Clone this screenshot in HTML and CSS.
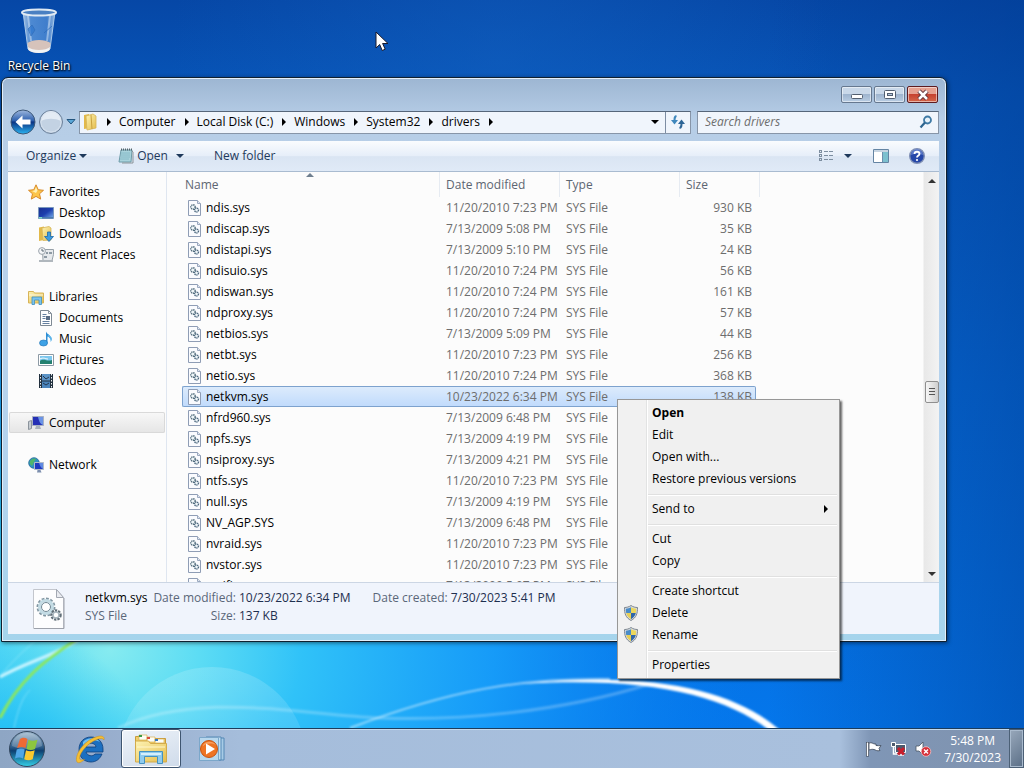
FILE: index.html
```
<!DOCTYPE html>
<html lang="en">
<head>
  <meta charset="UTF-8" />
  <meta name="viewport" content="width=device-width, initial-scale=1" />
  <title>drivers</title>
  <link rel="stylesheet" href="styles.css">
</head>
<body>

  <!-- Shared icons -->
  <svg class="defs" aria-hidden="true">
    <defs>
      <linearGradient id="orb" x1="0" y1="0" x2="0" y2="1">
        <stop offset="0" stop-color="#9fb9cf"/><stop offset=".45" stop-color="#2d5c88"/><stop offset=".55" stop-color="#0d3f70"/><stop offset="1" stop-color="#35d0e8"/>
      </linearGradient>
      <linearGradient id="back" x1="0" y1="0" x2="0" y2="1">
        <stop offset="0" stop-color="#9fb8de"/><stop offset=".45" stop-color="#2c5fae"/><stop offset=".5" stop-color="#0a3383"/><stop offset="1" stop-color="#2bb4f2"/>
      </linearGradient>
      <linearGradient id="folder" x1="0" y1="0" x2="1" y2="1">
        <stop offset="0" stop-color="#fdf3b4"/><stop offset="1" stop-color="#e5bd4c"/>
      </linearGradient>
      <linearGradient id="screen" x1="0" y1="0" x2="1" y2="1">
        <stop offset="0" stop-color="#1a2f8f"/><stop offset=".5" stop-color="#1d3fae"/><stop offset="1" stop-color="#7cb4ee"/>
      </linearGradient>
      <linearGradient id="glass" x1="0" y1="0" x2="1" y2="0">
        <stop offset="0" stop-color="#c4d9ee"/><stop offset=".25" stop-color="#5f99dc"/><stop offset=".75" stop-color="#4d8ad4"/><stop offset="1" stop-color="#b5cfea"/>
      </linearGradient>
      <symbol id="sys" viewBox="2 0 16 16">
        <path d="M2.500.5h9l3 3v12h-12z" fill="#fafbfe" stroke="#8f9db5"/>
        <path d="M11.500.5v3h3" fill="#e3e8f0" stroke="#9aa8bf"/>
        <circle cx="7" cy="7" r="2.200" fill="#eef5f8" stroke="#57707f" stroke-width="1.400" stroke-dasharray="1.300 .6"/>
        <circle cx="10.500" cy="10" r="2" fill="#eef5f8" stroke="#4d687f" stroke-width="1.400" stroke-dasharray="1.200 .6"/>
      </symbol>
      <symbol id="shield" viewBox="0 0 16 16">
        <path d="M8 .5C10 2 12.500 2.500 14.500 2.500c0 6-1 10-6.500 13C2.500 12.500 1.500 8.500 1.500 2.500 3.500 2.500 6 2 8 .5z" fill="#d9dde2" stroke="#7d868f"/>
        <path d="M8 2.200V8H3.200C2.900 6.800 2.800 5.200 2.800 3.700 4.800 3.600 6.500 3.100 8 2.200z" fill="#4a8cc8"/>
        <path d="M8 2.200V8h4.800c.3-1.200.4-2.800.4-4.300C11.200 3.600 9.500 3.100 8 2.200z" fill="#ecd75c"/>
        <path d="M8 8v6.200C5.500 12.700 3.900 10.800 3.200 8z" fill="#e8cf55"/>
        <path d="M8 8v6.200c2.500-1.500 4.100-3.400 4.800-6.200z" fill="#2f66a8"/>
      </symbol>
    </defs>
  </svg>

  <!-- Wallpaper -->
  <svg class="wallpaper" viewBox="0 0 1024 768" preserveAspectRatio="none" aria-hidden="true">
    <defs>
      <linearGradient id="sky" x1="0" y1="0" x2="0" y2="1">
        <stop offset="0" stop-color="#0647a6"/><stop offset=".12" stop-color="#0755b8"/><stop offset=".5" stop-color="#0668d4"/><stop offset="1" stop-color="#0478ee"/>
      </linearGradient>
      <radialGradient id="glow" gradientUnits="userSpaceOnUse" cx="110" cy="650" r="640" gradientTransform="matrix(1 0 0 .8 0 130)">
        <stop offset="0" stop-color="#86ebf0"/><stop offset=".14" stop-color="#5cdcf4"/><stop offset=".3" stop-color="#30c2f8"/><stop offset=".6" stop-color="#189ffa" stop-opacity=".9"/><stop offset="1" stop-color="#0a82f4" stop-opacity="0"/>
      </radialGradient>
      <linearGradient id="edge" x1="0" y1="0" x2="1" y2="0">
        <stop offset=".75" stop-color="#003a90" stop-opacity="0"/><stop offset="1" stop-color="#003a90" stop-opacity=".45"/>
      </linearGradient>
      <radialGradient id="topglow" gradientUnits="userSpaceOnUse" cx="500" cy="60" r="330">
        <stop offset="0" stop-color="#1464c4" stop-opacity=".45"/><stop offset="1" stop-color="#1464c4" stop-opacity="0"/>
      </radialGradient>
      <radialGradient id="corner" gradientUnits="userSpaceOnUse" cx="20" cy="760" r="130">
        <stop offset="0" stop-color="#10b8f4" stop-opacity=".8"/><stop offset="1" stop-color="#10b8f4" stop-opacity="0"/>
      </radialGradient>
      <linearGradient id="bubble" x1="0" y1="0" x2="0" y2="1">
        <stop offset="0" stop-color="#fff" stop-opacity=".16"/><stop offset="1" stop-color="#fff" stop-opacity="0"/>
      </linearGradient>
      <filter id="soft" x="-10%" y="-30%" width="120%" height="160%"><feGaussianBlur stdDeviation="1"/></filter>
    </defs>
    <rect width="1024" height="768" fill="url(#sky)"/>
    <rect width="1024" height="768" fill="url(#topglow)"/>
    <rect width="1024" height="768" fill="url(#glow)"/>
    <rect width="1024" height="768" fill="url(#corner)"/>
    <rect width="1024" height="768" fill="url(#edge)"/>
    <circle cx="212" cy="762" r="95" fill="url(#bubble)"/>
    <g fill="none" stroke="#fff" filter="url(#soft)">
      <path d="M118 728C200 690 300 715 380 718S560 712 650 684" stroke-opacity=".25" stroke-width="3"/>
      <path d="M350 728C450 690 520 678 610 679" stroke-opacity=".5" stroke-width="2"/>
      <path d="M520 684C660 670 735 692 780 730L769 730C725 696 650 676 520 684z" fill="#fff" stroke="none"/>
      <path d="M0 677C26 662 54 656 78 640" stroke="#c8f4ff" stroke-width="3"/>
      <path d="M0 676C12 662 22 652 36 640M14 728C20 700 26 694 30 690" stroke="#b9f3ff" stroke-opacity=".5"/>
      <path d="M0 718C18 682 44 660 76 640" stroke="#8ee85a" stroke-width="3"/>
    </g>
  </svg>

  <main class="desktop">
    <a class="desktop-icon" href="#recycle-bin">
      <svg width="40" height="48" viewBox="0 0 40 48" aria-hidden="true">
        <path d="M4 5l5 37c3 4 19 4 22 0l5-37z" fill="url(#glass)" fill-opacity=".8" stroke="#a9c9ea"/>
        <path d="M8.500 36c5-4 18-4 23 0l-1 7c-4 4-17 4-21 0z" fill="#d6c3bb"/>
        <path d="M9 40c4 4 18 4 22 0l-.5 3c-4 4-17 4-21 0z" fill="#f1f3f5"/>
        <path d="M9 9l3 25M31 9l-3 25" stroke="#dceaf8" stroke-width="2" opacity=".5"/>
        <path d="M9 22l4-4 3 5-4 6zM25 26c3-3 5-4 8-7" fill="#2f77cf" stroke="#2c6ab8" opacity=".7"/>
        <ellipse cx="20" cy="5.500" rx="17" ry="3" fill="#4a80c2" stroke="#dfe9f3" stroke-width="2"/>
      </svg>
      <span>Recycle Bin</span>
    </a>

    <!-- Explorer window -->
    <section class="window" aria-label="drivers">
      <div class="titlebar">
        <button class="win-btn" aria-label="Minimize"><svg width="14" height="12" viewBox="0 0 14 12"><rect x="1.500" y="5.500" width="11" height="4" rx="1" fill="#fff" stroke="#535f70"/></svg></button>
        <button class="win-btn" aria-label="Maximize"><svg width="14" height="12" viewBox="0 0 14 12"><rect x="1.500" y="1.500" width="11" height="8" rx="1" fill="#fff" stroke="#535f70"/><rect x="4.500" y="4.500" width="5" height="2" fill="#b7c9de" stroke="#535f70"/></svg></button>
        <button class="win-btn close" aria-label="Close"><svg width="14" height="12" viewBox="0 0 14 12"><path d="M3 2l8 8M11 2l-8 8" stroke="#5a3038" stroke-width="4.500"/><path d="M3 2l8 8M11 2l-8 8" stroke="#fff" stroke-width="2.500"/></svg></button>
      </div>

      <div class="navbar">
        <div class="history">
          <button aria-label="Back"><svg width="26" height="26" viewBox="0 0 26 26"><circle cx="13" cy="13" r="12" fill="url(#back)" stroke="#3d5878"/><path d="M5.500 13l7-6.500v4h8v5h-8v4z" fill="#fff"/></svg></button>
          <button aria-label="Forward"><svg width="26" height="26" viewBox="0 0 26 26"><circle cx="13" cy="13" r="11.500" fill="#c3d2e3" stroke="#6a7f99"/><path d="M3 12a10 10 0 0 1 20 0c-6-3-14-3-20 0z" fill="#e4ecf5"/><circle cx="13" cy="13" r="10" fill="none" stroke="#dbe6f1" stroke-opacity=".7"/></svg></button>
          <button aria-label="Recent pages"><svg width="10" height="6" viewBox="0 0 10 6"><path d="M1 .5h8L5 5z" fill="#5aa7d8" stroke="#23557f"/></svg></button>
        </div>
        <nav class="address" aria-label="Address">
          <svg class="address-icon" width="16" height="18" viewBox="0 0 16 18" aria-hidden="true"><path d="M2 2l5-1 1 14-6 1z" fill="#e2b94a"/><path d="M4 3l7-2 3 2v12l-9 2z" fill="url(#folder)" stroke="#d6b558" stroke-width=".8"/><path d="M9 2l1 14" stroke="#c9a23e" fill="none"/></svg>
          <i class="arrow"></i><a href="#computer">Computer</a>
          <i class="arrow"></i><a href="#c">Local Disk (C:)</a>
          <i class="arrow"></i><a href="#windows">Windows</a>
          <i class="arrow"></i><a href="#system32">System32</a>
          <i class="arrow"></i><a href="#drivers">drivers</a>
          <i class="arrow"></i>
          <button class="drop" aria-label="Previous locations"><i class="caret"></i></button>
          <button class="refresh" aria-label="Refresh"><svg width="16" height="14" viewBox="0 0 16 14"><path d="M6.500 1C4.500 1.500 4.500 3 4.500 6" fill="none" stroke="#4088bd" stroke-width="2"/><path d="M1 5h7l-3.500 4.500z" fill="#4088bd"/><path d="M9.500 13c2-.5 2-2 2-5" fill="none" stroke="#2d6596" stroke-width="2"/><path d="M8 9h7l-3.500-4.500z" fill="#2d6596"/></svg></button>
        </nav>
        <div class="search">
          <input type="text" placeholder="Search drivers" aria-label="Search drivers">
          <svg width="14" height="14" viewBox="0 0 14 14" aria-hidden="true"><circle cx="8.500" cy="5" r="3.500" fill="#e8f2fa" stroke="#3f7aa5" stroke-width="1.800"/><path d="M6 7.500L1.500 12.500" stroke="#2e6590" stroke-width="2.200"/></svg>
        </div>
      </div>

      <div class="client">
        <div class="toolbar">
          <button class="organize">Organize <i class="caret"></i></button>
          <button class="open-btn">
            <svg width="16" height="16" viewBox="0 0 16 16" aria-hidden="true"><path d="M3 2h11l-1 12H1z" fill="#a9d3dc" stroke="#6d9ba8"/><path d="M14 3l1 1v11H4" fill="none" stroke="#8b9499"/><path d="M3 5h9M3 7h9M3 9h9M2 11h9" stroke="#7fb5c2" stroke-width=".8"/><path d="M3 1.500h11" stroke="#55646b" stroke-width="2" stroke-dasharray="1 1"/></svg>
            Open
          </button>
          <button class="open-drop" aria-label="Open options"><i class="caret"></i></button>
          <button class="new-folder">New folder</button>
          <div class="view-tools">
            <button aria-label="Change your view"><svg width="16" height="14" viewBox="0 0 16 14"><g fill="none" stroke="#7d8ea0"><rect x="1.500" y="1.500" width="2" height="2"/><rect x="1.500" y="5.500" width="2" height="2"/><rect x="1.500" y="9.500" width="2" height="2"/><path d="M6 2.500h4M11 2.500h4M6 6.500h4M11 6.500h4M6 10.500h4M11 10.500h4"/></g></svg></button>
            <button class="view-drop" aria-label="More options"><i class="caret"></i></button>
            <button class="pane-btn" aria-label="Show the preview pane"><svg width="16" height="14" viewBox="0 0 16 14"><path d="M.5.5h15v13H.5z" fill="#fff" stroke="#6484a3"/><path d="M1 2h14" stroke="#8fabc6"/><path d="M10 3h5v10h-5z" fill="#7cc0cf"/><path d="M9.500 3v10" stroke="#6f8fae"/></svg></button>
            <button aria-label="Get help"><svg width="16" height="16" viewBox="0 0 16 16"><circle cx="8" cy="8" r="7.300" fill="#2547a8" stroke="#7f8fb4" stroke-width="1.400"/><path d="M2 7a6 6 0 0 1 12 0c-4-2-8-2-12 0z" fill="#7f9ade" opacity=".6"/><path d="M5.500 6c0-3 5-3 5 0 0 1.500-2.500 1.700-2.500 3.500" fill="none" stroke="#fff" stroke-width="1.800"/><circle cx="8" cy="12" r="1.100" fill="#fff"/></svg></button>
          </div>
        </div>

        <div class="body">
          <nav class="sidebar" aria-label="Navigation pane">
            <ul>
              <li><a href="#favorites"><svg viewBox="0 0 16 16"><path d="M8 .8l2.200 4.900 5.300.6-4 3.500 1.200 5.300L8 12.400l-4.700 2.700 1.200-5.300-4-3.500 5.300-.6z" fill="#fcc54a" stroke="#d88a2b"/><path d="M8 3l1.500 3.500L8 9 4 7l2.500-.5z" fill="#fff0b5"/></svg>Favorites</a>
                <ul>
                  <li><a href="#desktop"><svg viewBox="0 0 16 16"><path d="M.5 2.500h15v11H.5z" fill="url(#screen)" stroke="#7a98bd"/><path d="M1 12h14v1.500H1z" fill="#4b7bb0"/><path d="M1 12h3v1.500H1z" fill="#7fdcc8"/></svg>Desktop</a></li>
                  <li><a href="#downloads"><svg viewBox="0 0 16 16"><path d="M1 1.500l5-1V14l-5 1z" fill="#e2b94a"/><path d="M4 2l7-1.500 2 1.500v12l-8 .5z" fill="url(#folder)" stroke="#d6b558" stroke-width=".8"/><path d="M9.500 6h3v4.500h3L11 15.500 6.500 10.500h3z" fill="#3d9be0" stroke="#1d68a8" stroke-width=".8"/></svg>Downloads</a></li>
                  <li><a href="#recent"><svg viewBox="0 0 16 16"><path d="M4.500 2.500h11v5l-1.500 6h-9z" fill="#e6e9ec" stroke="#96a0a8"/><circle cx="4" cy="4" r="3.400" fill="#f4f6f8" stroke="#9aa3ab"/><path d="M4 2v2h2" fill="none" stroke="#5c6a75"/><path d="M8 5h2v2H8zM11 5h3v2h-3zM6 9h3v2H6z" fill="#8e9aa4"/><path d="M1 13h14v2H1z" fill="#b0b7bd"/></svg>Recent Places</a></li>
                </ul>
              </li>
              <li><a href="#libraries"><svg viewBox="0 0 16 16"><path d="M.5 2.500h5l1 1.500h9v10H.5z" fill="url(#folder)" stroke="#d8b458"/><path d="M1 6h14" stroke="#fff" opacity=".7"/><path d="M4 8h9.500v7.500H11V11H6.500v4.500H4z" fill="#7cc4ec" stroke="#3f90c2" stroke-width=".8"/></svg>Libraries</a>
                <ul>
                  <li><a href="#documents"><svg viewBox="0 0 16 16"><path d="M2.500.5h8l3 3v12h-11z" fill="#fff" stroke="#7e8994"/><path d="M10.500.5v3h3" fill="none" stroke="#8f99a3"/><path d="M4.500 4.500h4M4.500 6.500h3M4.500 8.500h3M4.500 11.500h7M4.500 13.500h7" stroke="#6580a0"/><path d="M8 6h4v4H8z" fill="#5b6e86"/></svg>Documents</a></li>
                  <li><a href="#music"><svg viewBox="0 0 16 16"><path d="M8 .5c1 3 6 3.500 4.500 9 0-2.500-1.500-3.500-3-4v7H8z" fill="#2f8fd6"/><path d="M10 3c1.500 1.500 4 2.500 4 5 0 1-.5 2-1.500 3 .5-3-1-5-2.500-5.500z" fill="#5cb4ea"/><ellipse cx="5.500" cy="12" rx="4" ry="3" fill="#3fa2e6" stroke="#1d70b2" stroke-width=".6"/></svg>Music</a></li>
                  <li><a href="#pictures"><svg viewBox="0 0 16 16"><path d="M.5 2.500h15v11H.5z" fill="#fff" stroke="#8d9aa5"/><path d="M2 4h12v8H2z" fill="#7cc7ee"/><path d="M2 9c4-3 7 1 12-1v4H2z" fill="#23806f"/><path d="M2 7c3-2 6 0 8 0" stroke="#fff" fill="none"/></svg>Pictures</a></li>
                  <li><a href="#videos"><svg viewBox="0 0 16 16"><path d="M1 1h14v14H1z" fill="#22303e"/><path d="M4 1h8v6.500H4z" fill="#5b93c6"/><path d="M4 8.500h8V15H4z" fill="#4b84bb"/><path d="M5 3l3 3 3-2M5 10l3 2 3-2" stroke="#24384f" fill="none"/><path d="M2.500 1v14M13.500 1v14" stroke="#eef2f5" stroke-dasharray="1.500 1.500"/></svg>Videos</a></li>
                </ul>
              </li>
              <li><a class="selected" href="#computer"><svg viewBox="0 0 16 16"><path d="M.5 6.500l3-1v8l-3 1z" fill="#c6ccd2" stroke="#8b939b"/><path d="M4.500 1.500h11v9h-11z" fill="#2530b5" stroke="#a8b1c2"/><path d="M10 2h5v8c-3-1-4-4-5-8z" fill="#6a93e6"/><path d="M8 11h4l1 3H7z" fill="#aab3bc"/></svg>Computer</a></li>
              <li><a href="#network"><svg viewBox="0 0 16 16"><circle cx="6" cy="6" r="5.300" fill="#2f90c4" stroke="#236a99" stroke-width=".8"/><path d="M2 4c2-3 5-3 6-2L6 5 4 9C2 8 1 6 2 4z" fill="#4fb56b"/><path d="M6.500 5.500h9v7h-9z" fill="#2038c0" stroke="#b1bac9"/><path d="M11 6h4v6c-2-1-3-3-4-6z" fill="#5f8ae2"/><path d="M9.500 13h3l1 2.500H9z" fill="#7d8fae"/></svg>Network</a></li>
            </ul>
          </nav>

          <div class="file-list">
            <table>
              <thead>
                <tr><th class="name sorted">Name</th><th class="date">Date modified</th><th class="type">Type</th><th class="size">Size</th></tr>
              </thead>
              <tbody>
                <tr><td><svg class="file"><use href="#sys"/></svg>ndis.sys</td><td>11/20/2010 7:23 PM</td><td>SYS File</td><td>930 KB</td></tr>
                <tr><td><svg class="file"><use href="#sys"/></svg>ndiscap.sys</td><td>7/13/2009 5:08 PM</td><td>SYS File</td><td>35 KB</td></tr>
                <tr><td><svg class="file"><use href="#sys"/></svg>ndistapi.sys</td><td>7/13/2009 5:10 PM</td><td>SYS File</td><td>24 KB</td></tr>
                <tr><td><svg class="file"><use href="#sys"/></svg>ndisuio.sys</td><td>11/20/2010 7:24 PM</td><td>SYS File</td><td>56 KB</td></tr>
                <tr><td><svg class="file"><use href="#sys"/></svg>ndiswan.sys</td><td>11/20/2010 7:24 PM</td><td>SYS File</td><td>161 KB</td></tr>
                <tr><td><svg class="file"><use href="#sys"/></svg>ndproxy.sys</td><td>11/20/2010 7:24 PM</td><td>SYS File</td><td>57 KB</td></tr>
                <tr><td><svg class="file"><use href="#sys"/></svg>netbios.sys</td><td>7/13/2009 5:09 PM</td><td>SYS File</td><td>44 KB</td></tr>
                <tr><td><svg class="file"><use href="#sys"/></svg>netbt.sys</td><td>11/20/2010 7:23 PM</td><td>SYS File</td><td>256 KB</td></tr>
                <tr><td><svg class="file"><use href="#sys"/></svg>netio.sys</td><td>11/20/2010 7:24 PM</td><td>SYS File</td><td>368 KB</td></tr>
                <tr class="selected"><td><svg class="file"><use href="#sys"/></svg>netkvm.sys</td><td>10/23/2022 6:34 PM</td><td>SYS File</td><td>138 KB</td></tr>
                <tr><td><svg class="file"><use href="#sys"/></svg>nfrd960.sys</td><td>7/13/2009 6:48 PM</td><td>SYS File</td><td></td></tr>
                <tr><td><svg class="file"><use href="#sys"/></svg>npfs.sys</td><td>7/13/2009 4:19 PM</td><td>SYS File</td><td></td></tr>
                <tr><td><svg class="file"><use href="#sys"/></svg>nsiproxy.sys</td><td>7/13/2009 4:21 PM</td><td>SYS File</td><td></td></tr>
                <tr><td><svg class="file"><use href="#sys"/></svg>ntfs.sys</td><td>11/20/2010 7:23 PM</td><td>SYS File</td><td></td></tr>
                <tr><td><svg class="file"><use href="#sys"/></svg>null.sys</td><td>7/13/2009 4:19 PM</td><td>SYS File</td><td></td></tr>
                <tr><td><svg class="file"><use href="#sys"/></svg>NV_AGP.SYS</td><td>7/13/2009 6:48 PM</td><td>SYS File</td><td></td></tr>
                <tr><td><svg class="file"><use href="#sys"/></svg>nvraid.sys</td><td>11/20/2010 7:23 PM</td><td>SYS File</td><td></td></tr>
                <tr><td><svg class="file"><use href="#sys"/></svg>nvstor.sys</td><td>11/20/2010 7:23 PM</td><td>SYS File</td><td></td></tr>
                <tr><td><svg class="file"><use href="#sys"/></svg>nwifi.sys</td><td>7/13/2009 5:07 PM</td><td>SYS File</td><td></td></tr>
              </tbody>
            </table>
          </div>

          <div class="scrollbar">
            <i class="scroll-up"></i>
            <div class="track-before"></div>
            <div class="thumb"></div>
            <div class="track-after"></div>
            <i class="scroll-down"></i>
          </div>
        </div>

        <div class="details">
          <svg class="details-icon" width="32" height="40" viewBox="0 0 32 40" aria-hidden="true">
            <path d="M.5.500h23l7 8v31H.5z" fill="#fdfdfe" stroke="#c3c6cd"/>
            <path d="M31 9v30.500H1" fill="none" stroke="#9da1aa"/>
            <path d="M23.500.5v8h7z" fill="#e9ebf0" stroke="#a3a8b2"/>
            <circle cx="13" cy="18" r="7.500" fill="none" stroke="#8296a2" stroke-width="4" stroke-dasharray="2.500 1.400"/>
            <circle cx="13" cy="18" r="6.500" fill="none" stroke="#c3dbe4" stroke-width="3"/>
            <circle cx="13" cy="18" r="4.500" fill="#fff" stroke="#6f8794"/>
            <circle cx="23" cy="26" r="4" fill="#fff" stroke="#626f78" stroke-width="3.500" stroke-dasharray="2 .9"/>
            <circle cx="23" cy="26" r="3" fill="#fff" stroke="#a9b6be" stroke-width="1.500"/>
          </svg>
          <div class="details-name"><strong>netkvm.sys</strong><span>SYS File</span></div>
          <dl class="props">
            <dt>Date modified:</dt><dd>10/23/2022 6:34 PM</dd>
            <dt>Size:</dt><dd>137 KB</dd>
          </dl>
          <dl class="props">
            <dt>Date created:</dt><dd>7/30/2023 5:41 PM</dd>
          </dl>
        </div>
      </div>
    </section>

    <!-- Context menu -->
    <div class="menu" role="menu">
      <div class="menu-group">
        <button role="menuitem" class="default">Open</button>
        <button role="menuitem">Edit</button>
        <button role="menuitem">Open with...</button>
        <button role="menuitem">Restore previous versions</button>
      </div>
      <div class="menu-group">
        <button role="menuitem">Send to <i class="arrow"></i></button>
      </div>
      <div class="menu-group">
        <button role="menuitem">Cut</button>
        <button role="menuitem">Copy</button>
      </div>
      <div class="menu-group">
        <button role="menuitem">Create shortcut</button>
        <button role="menuitem"><svg class="shield"><use href="#shield"/></svg>Delete</button>
        <button role="menuitem"><svg class="shield"><use href="#shield"/></svg>Rename</button>
      </div>
      <div class="menu-group">
        <button role="menuitem">Properties</button>
      </div>
    </div>

    <svg class="cursor" width="14" height="21" viewBox="0 0 14 21" aria-hidden="true"><path d="M1 1v16l3.700-3.500 2.500 6 3-1.300-2.600-5.700H13z" fill="#fff" stroke="#1a1a2a"/></svg>
  </main>

  <!-- Taskbar -->
  <footer class="taskbar">
    <button class="start" aria-label="Start">
      <svg width="38" height="38" viewBox="0 0 38 38">
        <circle cx="19" cy="19" r="17.500" fill="url(#orb)" stroke="#33485f"/>
        <path d="M4 16a15 13 0 0 1 30 0c-8 4-22 4-30 0z" fill="#fff" opacity=".22"/>
        <path d="M12 9c3-2 5-1.500 7.500 0L17.500 18c-2.500-1.500-5.500-1.500-8.500 0z" fill="#ee6a35"/>
        <path d="M20.500 9.700c2.500 1.500 5.500 1.500 9 0L27 19c-3 1.500-6 1.200-8.500 0z" fill="#8cc63f"/>
        <path d="M8.700 19.500c3-1.500 5.500-1.500 8 0L15 28.500c-2.500-1.500-5-1.500-8 0z" fill="#4fa6e6"/>
        <path d="M18 20.300c2.500 1.300 5.500 1.500 8.700 0l-2 9c-3 1.500-6 1.200-8.500 0z" fill="#fcc92f"/>
      </svg>
    </button>
    <button class="task" aria-label="Internet Explorer">
      <svg width="32" height="32" viewBox="0 0 32 32">
        <path d="M17 4c7 0 12 5 12 12v3H12c1 4 7 5 9 2h7c-2 5-6 8-11 8-7 0-12-5-12-12.500S10 4 17 4zm-5 10h10c-.500-5-9-5-10 0z" fill="#1c6fc0" stroke="#0d3f7c" stroke-width=".8"/>
        <path d="M9 9c4-5 13-5 17 0-6-3-12-2-17 3z" fill="#6fc0f2"/>
        <path d="M3 29C0 23 9 8 22 4c5-2 9-1 8 3-1-2-4-2-7-.500C14 10 6 19 5.500 25c0 2 2 2.500 5 1.500-3 3-6 4-7.500 2.500z" fill="#f5bf35" stroke="#c98d1a" stroke-width=".5"/>
      </svg>
    </button>
    <button class="task active" aria-label="Windows Explorer">
      <svg width="34" height="32" viewBox="0 0 34 32">
        <path d="M1.500 3.500h10l1 2h19v23h-30z" fill="#efcf69" stroke="#c79a3d"/>
        <path d="M5 2h8v5H5zM13 4h8v5h-8zM21 6h9v4h-9z" fill="#fdfdf5" stroke="#d8b050" stroke-width=".7"/>
        <path d="M5 2h3v2H5z" fill="#3d9a46"/><path d="M13 4h3v2h-3z" fill="#d94b3d"/><path d="M21 6h3v2h-3z" fill="#2f78c8"/>
        <path d="M1.500 8h13l2 2.500h16V29h-31z" fill="url(#folder)" stroke="#d3ab4b"/>
        <path d="M3 14h28" stroke="#fff7cc"/>
        <path d="M5.500 18.500h23v12h-5v-7h-13v7h-5z" fill="#8fcbee" stroke="#4592c0"/>
        <path d="M7 20h20v2H7z" fill="#d5effb"/>
      </svg>
    </button>
    <button class="task" aria-label="Windows Media Player">
      <svg width="28" height="28" viewBox="0 0 28 28">
        <path d="M11 3h15v22H11z" fill="#a7cbe6" stroke="#5588b5"/>
        <path d="M8 2h15v23H8z" fill="#c1def0" stroke="#5588b5"/>
        <path d="M1.500 2.500h19v23h-19z" fill="#b8d8ee" stroke="#7ba7ca"/>
        <circle cx="11" cy="14" r="8.500" fill="#ee7424" stroke="#c9530e"/>
        <path d="M5 10a8 8 0 0 1 13 0c-4-2-9-2-13 1z" fill="#fbb27a" opacity=".7"/>
        <path d="M8 8.500l9 5.500-9 5.500z" fill="#fff"/>
      </svg>
    </button>
    <div class="tray">
      <svg width="16" height="16" viewBox="0 0 16 16" aria-label="Action Center"><path d="M1.500 1v14.500" stroke="#3a4557" stroke-width="3"/><path d="M3 2c3-1 4 1 6 1h1v1.500c2 .5 3 0 5 0l-2 3 1 2c-3 1-4-.5-6-1-2-.5-3 0-5 .5z" fill="#fff" stroke="#3a4557" stroke-width=".8"/><path d="M1.500 1.500v13.500" stroke="#fff" stroke-width="1.500"/></svg>
      <svg width="17" height="16" viewBox="0 0 17 16" aria-label="Network"><path d="M5.500 3.500h10v8h-10z" fill="#4d5a6e" stroke="#fff"/><path d="M1.500 1.500h4v4h-4z" fill="#4d5a6e" stroke="#fff"/><path d="M3.500 6v7h4M8 14h6" stroke="#fff" fill="none" stroke-width="1.500"/><path d="M8 7l6 6.500M14 7l-6 6.500" stroke="#c81e2c" stroke-width="3"/></svg>
      <svg width="17" height="16" viewBox="0 0 17 16" aria-label="Volume muted"><path d="M1 5h3l4-4v13l-4-4H1z" fill="#fff" stroke="#4a5566" stroke-width=".8"/><circle cx="11" cy="10.500" r="4.800" fill="#d6303a" stroke="#f0c4c6" stroke-width=".8"/><path d="M9 8.500l4 4M13 8.500l-4 4" stroke="#fff" stroke-width="1.400"/></svg>
      <time class="clock">5:48 PM<br>7/30/2023</time>
      <button class="show-desktop" aria-label="Show desktop"></button>
    </div>
  </footer>

</body>
</html>
```
FILE: styles.css
```
*, *::before, *::after {
  box-sizing: border-box;
}

html, body {
  height: 100%;
  margin: 0;
}

body {
  display: flex;
  flex-direction: column;
  overflow: hidden;
  background: #0a58b8;
  color: #000;
  font: 12px/18px "Open Sans", "Noto Sans", sans-serif;
}

a {
  color: inherit;
  text-decoration: none;
}

button {
  margin: 0;
  padding: 0;
  border: none;
  background: none;
  color: inherit;
  font: inherit;
}

svg {
  display: block;
  flex: none;
}

.defs {
  position: absolute;
  width: 0;
  height: 0;
}

.wallpaper {
  position: absolute;
  inset: 0;
  width: 100%;
  height: 100%;
  z-index: -1;
}

.desktop {
  position: relative;
  flex: 1;
  min-height: 0;
}

.desktop-icon {
  display: flex;
  flex-direction: column;
  align-items: center;
  width: 78px;
  padding-top: 7px;
  gap: 2px;
  color: #fff;
  text-shadow: 1px 1px 2px #000, 0 1px 2px #000;
}

/* Triangles */
.arrow {
  border: 4px solid transparent;
  border-left-color: #000;
  border-right: none;
}

.caret {
  border: 4px solid transparent;
  border-top-color: currentColor;
  border-bottom: none;
}

/* Window frame */
.window {
  position: absolute;
  top: 77px;
  right: 77px;
  bottom: 86px;
  left: 1px;
  display: flex;
  flex-direction: column;
  padding: 0 7px 7px 6px;
  border: 1px solid #10202f;
  border-radius: 7px 7px 0 0;
  background: linear-gradient(#9db6d2, #b6cde6 40px, #b9d0e9 100px, #b4d3ee 70%, #a5d4ec);
  box-shadow: inset 0 0 0 1px #e3effa, 1px 1px 4px rgba(0, 0, 0, 0.5);
}

.titlebar {
  display: flex;
  justify-content: flex-end;
  gap: 2px;
  height: 32px;
  padding: 8px 1px 0 0;
}

.win-btn {
  display: flex;
  align-items: center;
  justify-content: center;
  width: 31px;
  height: 17px;
  border: 1px solid #66788f;
  border-radius: 2px;
  background: linear-gradient(#c9d8e9 45%, #9fb5cf 50%, #b9cde3);
  box-shadow: inset 0 0 0 1px rgba(255, 255, 255, 0.5);
}

.win-btn.close {
  border-color: #5d1b20;
  background: linear-gradient(#e6a191 45%, #c64230 50%, #d4664a);
}

.navbar {
  display: flex;
  align-items: center;
  gap: 6px;
  height: 31px;
  padding: 0 0 7px;
}

.history {
  display: flex;
  align-items: center;
  gap: 2px;
  margin: 0 -3px 0 2px;
}

.history button:last-child {
  padding: 4px 0;
}

.address, .search {
  display: flex;
  align-items: center;
  height: 23px;
  border: 1px solid #8795a8;
  border-top-color: #56667a;
  background: #f0f5fc;
}

.address {
  flex: 1;
  gap: 9px;
}

.address-icon {
  margin: 0 0 0 2px;
}

.address .arrow {
  margin-right: -1px;
}

.address .drop {
  display: flex;
  margin-left: auto;
  margin-right: -3px;
}

.address .refresh {
  display: flex;
  align-items: center;
  justify-content: center;
  align-self: stretch;
  width: 25px;
  border-left: 1px solid #7d8da3;
}

.search {
  width: 242px;
  padding: 0 5px 0 7px;
}

.search input {
  flex: 1;
  min-width: 0;
  padding: 0;
  border: none;
  outline: none;
  background: none;
  font: inherit;
}

.search input::placeholder {
  color: #6d6d6d;
  font-style: italic;
}

/* Client area */
.client {
  flex: 1;
  display: flex;
  flex-direction: column;
  min-height: 0;
  background: #fcfcfc;
}

.toolbar {
  display: flex;
  align-items: center;
  height: 31px;
  padding: 0 14px 0 18px;
  border-bottom: 1px solid #a9bbd0;
  background: linear-gradient(#fafcfe, #e6eef9 50%, #dae5f3 52%, #e0eaf7);
  color: #1e395b;
}

.toolbar button {
  display: flex;
  align-items: center;
  gap: 3px;
}

.toolbar .open-btn {
  margin-left: 31px;
}

.toolbar .open-drop {
  margin-left: 8px;
}

.toolbar .new-folder {
  margin-left: 30px;
}

.view-tools {
  display: flex;
  align-items: center;
  margin-left: auto;
}

.view-drop {
  margin: 0 21px 0 10px;
}

.pane-btn {
  margin-right: 20px;
}

.body {
  flex: 1;
  display: flex;
  min-height: 0;
}

.sidebar {
  width: 159px;
  padding: 9px 1px 0;
  border-right: 1px solid #dfe6f0;
}

.sidebar ul {
  margin: 0;
  padding: 0;
  list-style: none;
}

.sidebar > ul {
  display: flex;
  flex-direction: column;
  gap: 21px;
}

.sidebar a {
  display: flex;
  align-items: center;
  gap: 5px;
  height: 21px;
  padding-left: 19px;
}

.sidebar ul ul a {
  padding-left: 29px;
}

.sidebar svg {
  width: 16px;
  height: 16px;
}

.sidebar .selected {
  border-radius: 2px;
  background: linear-gradient(#f8f8f8, #e5e5e5);
  box-shadow: inset 0 0 0 1px #d9d9d9;
}

.file-list {
  flex: 1;
  min-width: 0;
  padding-left: 15px;
  overflow: hidden;
}

table {
  width: 574px;
  table-layout: fixed;
  border-collapse: separate;
  border-spacing: 0;
}

th {
  position: relative;
  height: 25px;
  padding: 0 6px;
  border-right: 1px solid #e6ebf2;
  color: #5c6672;
  font-weight: normal;
  text-align: left;
}

th.name {
  width: 258px;
  padding-left: 3px;
}

th.date, th.type {
  width: 120px;
}

th.size {
  border-right: none;
}

th.size::after {
  content: "";
  position: absolute;
  top: 0;
  right: -4px;
  height: 100%;
  border-right: 1px solid #e6ebf2;
}

/* Sort direction mark */
th.sorted::after {
  content: "";
  position: absolute;
  top: 1px;
  left: 50%;
  margin-left: -5px;
  border: 4px solid transparent;
  border-bottom-color: #6f7f8f;
  border-top: none;
}

td {
  height: 21px;
  padding: 0 4px 0 6px;
  color: #6d6d6d;
  line-height: 19px;
  white-space: nowrap;
}

td:first-child {
  display: flex;
  align-items: center;
  gap: 2px;
  color: #000;
}

td:last-child {
  text-align: right;
}

.file {
  width: 16px;
  height: 16px;
}

tr.selected td {
  border: solid #7da2ce;
  border-width: 1px 0;
  background: linear-gradient(#dcebfc, #c1dbfc);
}

tr.selected td:first-child {
  border-left-width: 1px;
  border-radius: 2px 0 0 2px;
  padding-left: 5px;
}

tr.selected td:last-child {
  border-right-width: 1px;
  border-radius: 0 2px 2px 0;
  padding-right: 3px;
}

.scrollbar {
  display: flex;
  flex-direction: column;
  align-items: center;
  width: 16px;
  padding: 7px 0 6px;
  border-left: 1px solid #f2f2f2;
  background: linear-gradient(90deg, #e8e8e8, #f3f3f3);
}

.scroll-up, .scroll-down {
  border: 4px solid transparent;
}

.scroll-up {
  border-top: none;
  border-bottom-color: #333;
}

.scroll-down {
  border-bottom: none;
  border-top-color: #333;
}

.track-before {
  flex: 196;
}

.track-after {
  flex: 168;
}

.thumb {
  width: 14px;
  height: 22px;
  padding: 6px 3px;
  border: 1px solid #8f8f8f;
  border-radius: 2px;
  background:
    repeating-linear-gradient(#555 0 1px, transparent 1px 3px) content-box,
    linear-gradient(90deg, #f6f6f6, #cfcfcf);
}

/* Details pane */
.details {
  display: flex;
  height: 52px;
  padding: 6px 25px 0;
  border-top: 1px solid #ccd6e4;
  background: #f0f4fc;
  color: #1e2f4f;
}

.details-name {
  display: flex;
  flex-direction: column;
  margin: 0 6px 0 20px;
}

.details-name strong {
  color: #000;
  font-weight: normal;
}

.details-name span, .props dt {
  color: #5a6779;
}

.props {
  display: grid;
  grid-template-columns: auto auto;
  grid-auto-rows: 18px;
  column-gap: 3px;
  margin: 0 22px 0 0;
}

.props dt {
  text-align: right;
}

.props dd {
  margin: 0;
}

/* Context menu */
.menu {
  position: absolute;
  top: 399px;
  left: 617px;
  width: 223px;
  padding: 2px;
  border: 1px solid #979797;
  background: linear-gradient(90deg, #f1f1f1 28px, #e2e3e3 28px 29px, #fff 29px 30px, #f0f0f0 30px);
  box-shadow: 2px 2px 2px rgba(0, 0, 0, 0.6);
}

.menu-group + .menu-group::before {
  content: "";
  display: block;
  height: 2px;
  margin: 4px 0 2px 28px;
  border-top: 1px solid #e0e0e0;
  border-bottom: 1px solid #fff;
}

.menu button {
  display: flex;
  align-items: center;
  width: 100%;
  height: 22px;
  padding: 0 9px 0 32px;
}

.menu .default {
  font-weight: bold;
}

.menu .arrow {
  margin-left: auto;
}

.shield {
  width: 16px;
  height: 16px;
  margin: 0 13px 0 -29px;
}

.cursor {
  position: absolute;
  top: 31px;
  left: 375px;
}

/* Taskbar */
.taskbar {
  display: flex;
  height: 40px;
  padding-left: 8px;
  border-top: 1px solid #1c3c5c;
  background: linear-gradient(90deg, #8ea6c4, #93a8c8 60px, #a5bddb 240px, #a9c0dd 82%, #7f96b6 85%, #8093ae);
  box-shadow: inset 0 1px 0 #c3daef;
}

.start {
  display: flex;
  align-items: center;
}

.task {
  display: flex;
  align-items: center;
  justify-content: center;
  width: 60px;
  margin-left: 1px;
  border-radius: 3px;
}

.start + .task {
  margin-left: 14px;
}

.task.active {
  border: 1px solid #3e5570;
  background: linear-gradient(160deg, #eef3f9, #cfdbea);
  box-shadow: inset 0 0 0 1px #fff;
}

.tray {
  display: flex;
  align-items: center;
  gap: 8px;
  margin-left: auto;
  color: #fff;
}

.clock {
  margin: 0 0 0 4px;
  text-align: center;
  line-height: 17px;
}

.show-desktop {
  align-self: stretch;
  width: 15px;
  border: 1px solid #4c6076;
  background: linear-gradient(135deg, #98a8bb, #5b6f87);
  box-shadow: inset 0 0 0 1px #a9bacd;
}
```
